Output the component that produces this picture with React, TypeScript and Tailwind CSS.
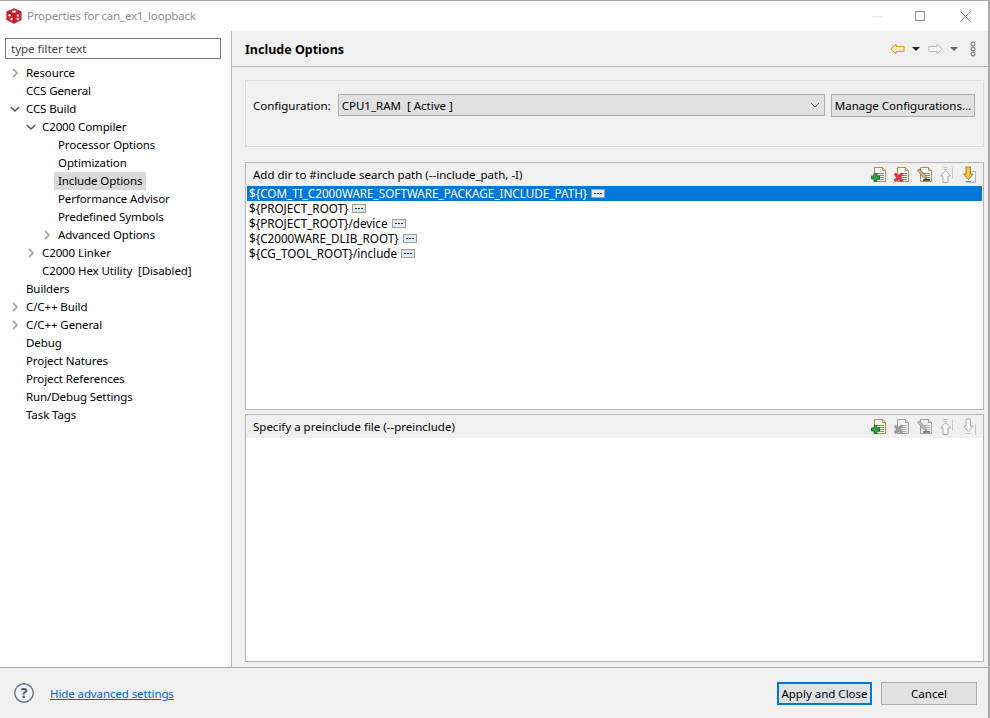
import React from "react";

const Chev = ({ open }: { open?: boolean }) => (
  <svg width="10" height="10" viewBox="0 0 10 10" fill="none" className="shrink-0">
    {open ? (
      <path d="M.8 3 L5 7 L9.2 3" stroke="#555" strokeWidth="1.5" />
    ) : (
      <path d="M3 .8 L7 5 L3 9.2" stroke="#a6a6a6" strokeWidth="1.7" />
    )}
  </svg>
);

const Row = ({ level, label, exp, sel }: { level: number; label: string; exp?: "o" | "c"; sel?: boolean }) => {
  const pad = level === 0 ? "pl-[10px]" : level === 1 ? "pl-[26px]" : "pl-[42px]";
  return (
    <div className={`flex h-[18px] items-center ${pad}`}>
      <span className="flex w-[16px] shrink-0">{exp ? <Chev open={exp === "o"} /> : null}</span>
      <span className={`leading-[18px] whitespace-pre ${sel ? "bg-[#d9d9d9] -ml-[4px] px-[4px]" : ""}`}>{label}</span>
    </div>
  );
};

const Logo = () => (
  <svg width="16" height="16" viewBox="0 0 16 16">
    <path d="M8 .3 L15.6 3.4 V12 L8 15.8 L.4 12 V3.4 Z" fill="#d0232f" />
    <path d="M1 4 L8 7 L15 4" stroke="#8a1019" strokeWidth=".6" fill="none" />
    <path d="M8 7 V15.5" stroke="#8a1019" strokeWidth=".6" />
    <ellipse cx="8" cy="3.6" rx="2" ry="1.2" fill="#fff" />
    <circle cx="3.6" cy="7.3" r="1.2" fill="#fff" />
    <circle cx="5.6" cy="11" r="1.2" fill="#fff" />
    <circle cx="11.8" cy="7.6" r="1.2" fill="#fff" />
    <circle cx="11.8" cy="11" r="1.2" fill="#fff" />
  </svg>
);

const Ell = () => (
  <span className="ml-[4px] inline-flex h-[9px] w-[14px] items-center justify-center gap-[1px] border border-[#a0a08c] bg-[#e3ebf5]">
    <i className="h-[1px] w-[2px] bg-[#2a3a66]" />
    <i className="h-[1px] w-[2px] bg-[#2a3a66]" />
    <i className="h-[1px] w-[2px] bg-[#2a3a66]" />
  </span>
);

const Doc = ({ gray }: { gray?: boolean }) => (
  <>
    <path d="M3.5 .5 H11.5 L14.5 3.5 V14.5 H3.5 Z" fill={gray ? "#f2f2f2" : "#fbf8ee"} stroke={gray ? "#a0a0a0" : "#a88f55"} />
    <path d="M11.5 .5 V3.5 H14.5" fill={gray ? "#ddd" : "#f0dda0"} stroke={gray ? "#a0a0a0" : "#a88f55"} />
    <path d="M6 6.5 H13 M7 8.5 H13 M7 10.5 H13 M7 12.5 H13" stroke={gray ? "#b5b5b5" : "#6c8cc0"} />
  </>
);

const Add = () => (
  <svg width="16" height="16" viewBox="0 0 16 16">
    <Doc />
    <path d="M.5 9 H3 V6.5 H6 V9 H8.5 V12 H6 V14.5 H3 V12 H.5 Z" fill="#35a548" stroke="#145c22" strokeWidth=".8" />
  </svg>
);
const Del = ({ gray }: { gray?: boolean }) => (
  <svg width="16" height="16" viewBox="0 0 16 16">
    <Doc gray={gray} />
    <path d="M1.5 6 L4.5 8 L7.5 6 L9 7.5 L6.5 10.3 L9 13 L7.5 14.8 L4.5 12.8 L1.5 14.8 L0 13 L2.5 10.3 L0 7.5 Z" fill={gray ? "#9a9a9a" : "#e5303c"} stroke={gray ? "#8a8a8a" : "#c02028"} strokeWidth=".5" />
  </svg>
);
const Edit = ({ gray }: { gray?: boolean }) => (
  <svg width="16" height="16" viewBox="0 0 16 16">
    <Doc gray={gray} />
    <path d="M.5 3.5 L2.5 2 L9 9 L9.5 12 L6.5 10.5 Z" fill={gray ? "#bdbdbd" : "#e8b070"} stroke={gray ? "#8c8c8c" : "#6a5a40"} strokeWidth=".7" />
    <path d="M6 13 H13" stroke={gray ? "#666" : "#222"} strokeWidth="1.5" />
  </svg>
);
const Up = () => (
  <svg width="16" height="18" viewBox="0 0 16 18" className="-ml-[2px]">
    <path d="M5.5 1.5 H9.5 M5.5 3.5 H9.5" stroke="#c4c4c4" />
    <path d="M7.5 4.5 L12.5 10 H10 V16.5 H5 V10 H2.5 Z" fill="#f8f8f8" stroke="#ababab" />
    <path d="M14.5 1.5 V13" stroke="#c8c8c8" />
  </svg>
);
const Down = ({ on }: { on?: boolean }) => (
  <svg width="16" height="18" viewBox="0 0 16 18">
    {on ? <path d="M10 5.5 H14.5 V16.5 H5" fill="#f0f4fa" stroke="#aeb9cf" /> : <path d="M14.5 6 V17" stroke="#c8c8c8" />}
    <path d="M5 1 H9.5 V8 H12 L7.5 13.5 L2.5 8 H5 Z" fill={on ? "#f6c84a" : "#f8f8f8"} stroke={on ? "#b2770e" : "#ababab"} />
    <path d="M4.5 15.5 H10" stroke={on ? "#7a8aa8" : "#c4c4c4"} />
  </svg>
);

const Section = ({ title, active, rows, className }: { title: string; active?: boolean; rows?: string[]; className: string }) => (
  <section className={`flex flex-col border border-[#b4b4b4] ${className}`}>
    <header className="flex h-[23px] shrink-0 items-center justify-between bg-[#f0f0f0] pl-[7px] pr-[6px]">
      <span className="leading-[23px]">{title}</span>
      <div className="flex items-center gap-[7px]">
        <Add />
        <Del gray={!active} />
        <Edit gray={!active} />
        <Up />
        <Down on={active} />
      </div>
    </header>
    <div className="flex-1 bg-white px-[1px]">
      {rows?.map((r, i) => (
        <div
          key={r}
          className={`flex h-[15px] items-center pl-[2px] text-[11.7px] leading-[15px] ${i === 0 ? "bg-[#0078d7] text-white" : ""}`}
        >
          <span className="whitespace-pre">{r}</span>
          <Ell />
        </div>
      ))}
    </div>
  </section>
);

export default function App() {
  return (
    <div
      className="flex h-[718px] w-[990px] flex-col overflow-hidden border-t border-r-2 border-[#a9a9a9] bg-[#f0f0f0] text-[11.5px] text-black"
      style={{ fontFamily: '"Noto Sans", sans-serif' }}
    >
      <div className="flex h-[30px] shrink-0 items-center bg-white pl-[6px]">
        <Logo />
        <span className="ml-[5px] tracking-[-0.2px] text-[#8e8e98]">Properties for can_ex1_loopback</span>
        <div className="ml-auto flex items-center text-[#8a8a8a]">
          <span className="mr-[33px] h-[1px] w-[10px] bg-[#e6e6e6]" />
          <span className="mr-[35px] h-[10px] w-[10px] border border-[#8a8a8a]" />
          <svg width="11" height="11" viewBox="0 0 11 11" className="mr-[17px]">
            <path d="M.5 .5 L10.5 10.5 M10.5 .5 L.5 10.5" stroke="#8a8a8a" />
          </svg>
        </div>
      </div>

      <div className="flex min-h-0 flex-1">
        <aside className="flex w-[232px] shrink-0 flex-col border-r border-[#b4b4b4] bg-white pt-[7px]">
          <div className="mr-[10px] ml-[5px] flex h-[21px] shrink-0 items-center border border-[#7a7a7a] pl-[5px] text-[#444]">
            type filter text
          </div>
          <div className="mt-[5px] whitespace-nowrap tracking-[-0.1px]">
            <Row level={0} label="Resource" exp="c" />
            <Row level={0} label="CCS General" />
            <Row level={0} label="CCS Build" exp="o" />
            <Row level={1} label="C2000 Compiler" exp="o" />
            <Row level={2} label="Processor Options" />
            <Row level={2} label="Optimization" />
            <Row level={2} label="Include Options" sel />
            <Row level={2} label="Performance Advisor" />
            <Row level={2} label="Predefined Symbols" />
            <Row level={2} label="Advanced Options" exp="c" />
            <Row level={1} label="C2000 Linker" exp="c" />
            <Row level={1} label="C2000 Hex Utility  [Disabled]" />
            <Row level={0} label="Builders" />
            <Row level={0} label="C/C++ Build" exp="c" />
            <Row level={0} label="C/C++ General" exp="c" />
            <Row level={0} label="Debug" />
            <Row level={0} label="Project Natures" />
            <Row level={0} label="Project References" />
            <Row level={0} label="Run/Debug Settings" />
            <Row level={0} label="Task Tags" />
          </div>
        </aside>

        <main className="flex min-w-0 flex-1 flex-col">
          <div className="flex h-[36px] shrink-0 items-center justify-between border-b border-[#b4b4b4] pl-[13px] pr-[12px]">
            <h1 className="pt-[4px] text-[12.5px] font-bold">Include Options</h1>
            <div className="flex items-center pt-[1px]">
              <svg width="15" height="12" viewBox="0 0 15 12">
                <path d="M.8 6 L6 1 V3.5 H14 V8.5 H6 V11 Z" fill="#fdeab0" stroke="#d19a1e" />
              </svg>
              <span className="ml-[7px] h-0 w-0 border-x-[4px] border-t-[4px] border-x-transparent border-t-[#222]" />
              <svg width="15" height="12" viewBox="0 0 15 12" className="ml-[8px]">
                <path d="M14.2 6 L9 1 V3.5 H1 V8.5 H9 V11 Z" fill="#f5f5f5" stroke="#bcbcbc" />
              </svg>
              <span className="ml-[7px] h-0 w-0 border-x-[4px] border-t-[4px] border-x-transparent border-t-[#666]" />
              <svg width="6" height="16" viewBox="0 0 6 16" className="ml-[12px]">
                <circle cx="3" cy="3" r="2" fill="#f0f0f0" stroke="#666" />
                <circle cx="3" cy="8" r="2" fill="#f0f0f0" stroke="#666" />
                <circle cx="3" cy="13" r="2" fill="#f0f0f0" stroke="#666" />
              </svg>
            </div>
          </div>

          <div className="flex min-h-0 flex-1 flex-col pl-[13px] pr-[4px] pt-[13px]">
            <div className="flex h-[67px] shrink-0 items-start border border-[#dcdcdc] pl-[7px] pr-[8px] pt-[13px]">
              <span className="pt-[1px] leading-[22px]">Configuration:</span>
              <div className="ml-[7px] flex h-[22px] flex-1 items-center justify-between border border-[#adadad] bg-[#e1e1e1] px-[3px]">
                <span className="pt-[1px] whitespace-pre">CPU1_RAM  [ Active ]</span>
                <svg width="10" height="6" viewBox="0 0 10 6" className="mr-[1px]">
                  <path d="M1 1 L5 5 L9 1" stroke="#6a6a6a" fill="none" />
                </svg>
              </div>
              <button className="ml-[6px] h-[23px] w-[144px] whitespace-nowrap border border-[#adadad] bg-[#e1e1e1] pt-[1px] text-center">
                Manage Configurations...
              </button>
            </div>

            <Section
              className="mt-[15px] h-[248px] shrink-0"
              title="Add dir to #include search path (--include_path, -I)"
              active
              rows={[
                "${COM_TI_C2000WARE_SOFTWARE_PACKAGE_INCLUDE_PATH}",
                "${PROJECT_ROOT}",
                "${PROJECT_ROOT}/device",
                "${C2000WARE_DLIB_ROOT}",
                "${CG_TOOL_ROOT}/include",
              ]}
            />
            <Section className="mt-[4px] h-[248px] shrink-0" title="Specify a preinclude file (--preinclude)" />
          </div>
        </main>
      </div>

      <footer className="flex h-[51px] shrink-0 items-center border-t border-[#a9a9a9] pl-[14px] pr-[11px]">
        <svg width="20" height="20" viewBox="0 0 20 20">
          <circle cx="10" cy="10" r="9.2" fill="#f0f3f8" stroke="#66708a" strokeWidth="1.4" />
          <text x="10" y="15" textAnchor="middle" fontSize="14" fontWeight="700" fill="#4a5470" fontFamily="Noto Sans">?</text>
        </svg>
        <a className="ml-[16px] pt-[2px] tracking-[-0.1px] text-[#0066cc] underline">Hide advanced settings</a>
        <button className="ml-auto h-[23px] w-[95px] border-2 border-[#0078d7] bg-[#e1e1e1] pt-[1px] text-center">Apply and Close</button>
        <button className="ml-[9px] h-[23px] w-[96px] border border-[#adadad] bg-[#e1e1e1] pt-[1px] text-center">Cancel</button>
      </footer>
    </div>
  );
}
